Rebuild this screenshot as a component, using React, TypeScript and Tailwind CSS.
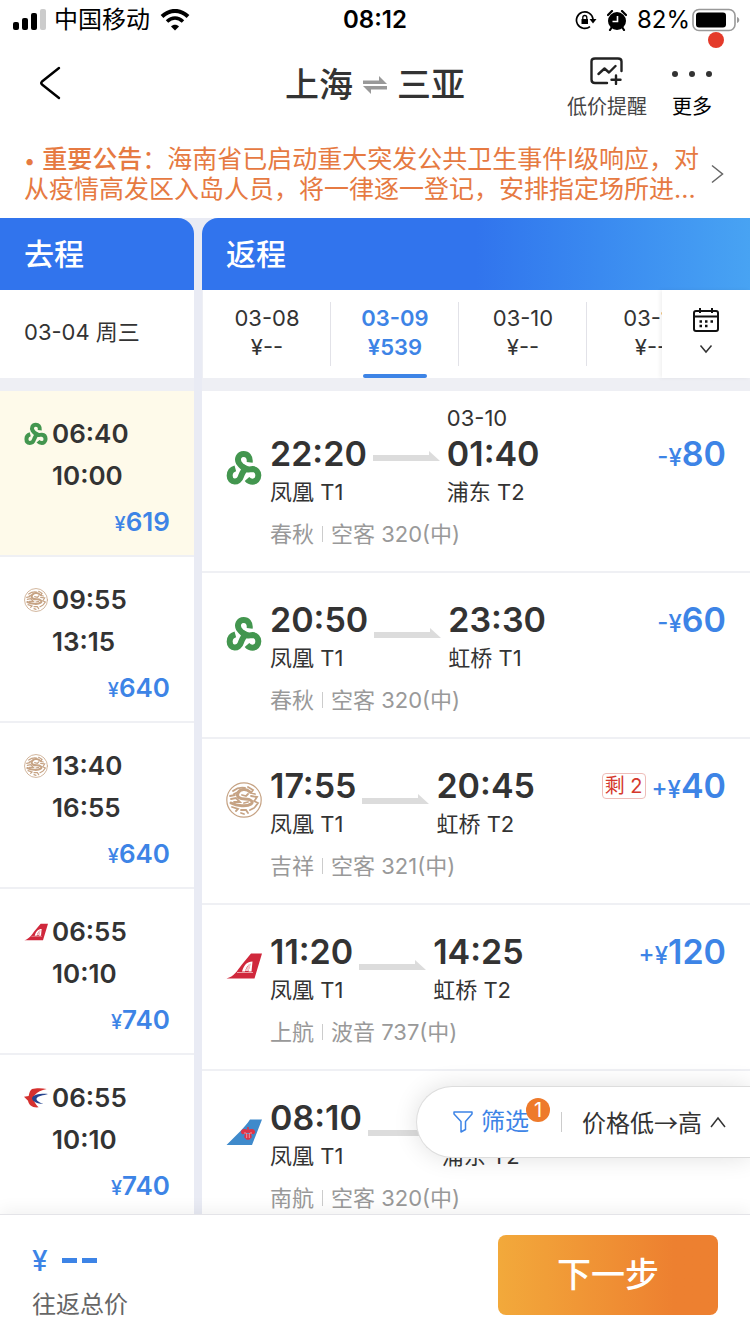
import React, { useState } from 'react';
import { clsx } from 'clsx';

type Airline = 'spring' | 'juneyao' | 'shanghai' | 'eastern' | 'southern';

interface OutboundFlight {
  id: number;
  airline: Airline;
  depart: string;
  arrive: string;
  price: string;
}

interface ReturnFlight {
  id: number;
  airline: Airline;
  depart: string;
  arrive: string;
  nextDay?: string;
  from: string;
  to: string;
  carrier: string;
  aircraft: string;
  sign: string;
  price: string;
  left?: string;
}

const outbound: OutboundFlight[] = [
  { id: 1, airline: 'spring', depart: '06:40', arrive: '10:00', price: '619' },
  { id: 2, airline: 'juneyao', depart: '09:55', arrive: '13:15', price: '640' },
  { id: 3, airline: 'juneyao', depart: '13:40', arrive: '16:55', price: '640' },
  { id: 4, airline: 'shanghai', depart: '06:55', arrive: '10:10', price: '740' },
  { id: 5, airline: 'eastern', depart: '06:55', arrive: '10:10', price: '740' },
];

const returns: ReturnFlight[] = [
  { id: 1, airline: 'spring', depart: '22:20', arrive: '01:40', nextDay: '03-10', from: '凤凰 T1', to: '浦东 T2', carrier: '春秋', aircraft: '空客 320(中)', sign: '-', price: '80' },
  { id: 2, airline: 'spring', depart: '20:50', arrive: '23:30', from: '凤凰 T1', to: '虹桥 T1', carrier: '春秋', aircraft: '空客 320(中)', sign: '-', price: '60' },
  { id: 3, airline: 'juneyao', depart: '17:55', arrive: '20:45', from: '凤凰 T1', to: '虹桥 T2', carrier: '吉祥', aircraft: '空客 321(中)', sign: '+', price: '40', left: '剩 2' },
  { id: 4, airline: 'shanghai', depart: '11:20', arrive: '14:25', from: '凤凰 T1', to: '虹桥 T2', carrier: '上航', aircraft: '波音 737(中)', sign: '+', price: '120' },
  { id: 5, airline: 'southern', depart: '08:10', arrive: '11:05', from: '凤凰 T1', to: '浦东 T2', carrier: '南航', aircraft: '空客 320(中)', sign: '+', price: '120' },
];

const days = [
  { date: '03-08', price: '¥--' },
  { date: '03-09', price: '¥539' },
  { date: '03-10', price: '¥--' },
  { date: '03-11', price: '¥--' },
];

function AirlineLogo({ airline, className }: { airline: Airline; className?: string }) {
  switch (airline) {
    case 'spring':
      return (
        <svg viewBox="-2 -2 108 106" className={className} fill="none" stroke="#43964f" strokeWidth="18">
          <path d="M69 34C71 17 62 9 51 9C36 9 30 24 37 36C42 44 48 48 54 53C62 59 68 54 78 54C88 55 95 62 95 73C95 84 87 92 78 92C71 92 66 90 61 84" />
          <path d="M60 44C54 56 48 62 43 76C37 97 9 97 9 74C9 62 15 55 26 52" />
        </svg>
      );
    case 'juneyao':
      return (
        <svg viewBox="0 0 36 36" className={className} fill="none" stroke="#c6a384" strokeLinecap="round">
          <circle cx="18" cy="18" r="17.2" strokeWidth="1.2" />
          <path d="M24 10C20 6 14 7 12 11C10 15 14 17 19 17C25 17 28 20 25 22C21 25 11 24 5 21" strokeWidth="3" />
          <path d="M7 9C11 6 14 5 19 6M8 12L14 9M22 5L27 8L25 11L29 12M4 14L9 13M5 17L10 16L14 20L8 20M16 13L20 14L22 12M25 14L31 15L29 18M28 19L32 21L29 25M22 20L18 21M6 25L12 27L10 29M15 28L20 28L22 31M24 28L28 26M15 31L18 32" strokeWidth="1.8" />
        </svg>
      );
    case 'shanghai':
      return (
        <svg viewBox="0 0 36 36" className={className}>
          <path d="M25 5.500H36L28.500 30.500H0.500C8 28.500 11 23 15.500 17Z" fill="#d0283c" />
          <path d="M16 23.500C18 17 21 13.500 26.500 13.500L25.500 23.500H22.500L24.500 15.500C21.500 17 20 20 19 23.500Z" fill="#fff" />
          <path d="M19 23L23 16H25L22.500 23Z" fill="#f3c9cd" />
          <path d="M11 24.500H27" stroke="#eba3a8" strokeWidth="1" />
        </svg>
      );
    case 'eastern':
      return (
        <svg viewBox="0 0 36 36" className={className}>
          <path d="M12 4.500C18 3 27 3 34 4.500C26 6 20 9 16 14C13 18 15 26 22 32C12 33 7 28 6 22L0 16L7 15C8 10 9 7 12 4.500Z" fill="#d5312f" />
          <path d="M36 12C25 11 13 13 12 18.500C12 23 20 27 29 27C21 24 18 21.500 19 18.500C21 15 29 14 36 12Z" fill="#27458f" />
        </svg>
      );
    case 'southern':
      return (
        <svg viewBox="0 0 36 36" className={className}>
          <path d="M24 5.500H36L26 31H0.500L14.500 17C18 13 21 10 24 5.500Z" fill="#3f8acb" />
          <path d="M22 13V17M17 20C14.500 18 16 15 20 16L22 18L24 16C28 15 29.500 18 27 20M20 18L19 23L21 25H23L25 23L24 18Z" fill="#df3447" stroke="#df3447" strokeWidth="1.600" />
          <path d="M19 18V20M20.700 19V24M23.300 19V24M25 18V20" stroke="#f3c1c8" strokeWidth="0.700" />
        </svg>
      );
  }
}

function StatusBar() {
  return (
    <div className="grid h-10 grid-cols-3 items-center pr-3 pl-3 text-black">
      <div className="flex items-center">
        <svg viewBox="0 0 34 22" className="mr-2 h-[22px] w-[34px]">
          <rect x="1" y="13" width="6" height="8" rx="2" />
          <rect x="10" y="9" width="6" height="12" rx="2" />
          <rect x="19" y="4" width="6" height="17" rx="2" />
          <rect x="28" y="0" width="6" height="21" rx="2" fill="#ccc" />
        </svg>
        <span className="text-2xl">中国移动</span>
        <svg viewBox="0 0 30 22" className="ml-2.5 h-[22px] w-[30px]" fill="none" stroke="#000">
          <path d="M2 7.500C10 0 20 0 28 7.500" strokeWidth="4" />
          <path d="M7 12.500C12 8 18 8 23 12.500" strokeWidth="3.600" />
          <path d="M11 17.500C13 15 17 15 19 17.500L15 21.500Z" fill="#000" stroke="none" />
        </svg>
      </div>
      <div className="text-center text-2xl font-semibold">08:12</div>
      <div className="flex items-center justify-end">
        <svg viewBox="0 0 22 20" className="mr-2.5 h-5 w-[22px]" fill="none" stroke="#000" strokeWidth="1.700">
          <path d="M15 16.600A8.300 8.300 0 1 1 18 9" />
          <path d="M14.500 9H21.500L18 13.500Z" fill="#000" stroke="none" />
          <rect x="6.500" y="9" width="6.500" height="5" fill="#000" stroke="none" />
          <path d="M7.800 9V7.500A2 2 0 0 1 11.800 7.500V9" strokeWidth="1.300" />
        </svg>
        <svg viewBox="0 0 20 21" className="mr-2.5 h-[21px] w-5">
          <circle cx="10" cy="11" r="9" />
          <path d="M1 5L5 1M15 1L19 5M3 20L5 17M17 20L15 17" stroke="#000" strokeWidth="2.200" strokeLinecap="round" />
          <path d="M10.500 6V11.500H5.500" stroke="#fff" strokeWidth="1.600" fill="none" />
        </svg>
        <span className="mr-0.5 text-2xl">82%</span>
        <svg viewBox="0 0 48 24" className="-mr-0.5 h-6 w-12 shrink-0">
          <rect x="1" y="1.500" width="42" height="21" rx="6" fill="none" stroke="#999" strokeWidth="1.600" />
          <rect x="4" y="4.500" width="30" height="15" rx="3" />
          <path d="M45 9C48 10 48 14 45 15Z" fill="#999" />
        </svg>
      </div>
    </div>
  );
}

function NavBar() {
  return (
    <header className="relative grid h-[90px] grid-cols-[1fr_auto_1fr] items-center">
      <button aria-label="返回" className="ml-9 flex h-10 w-10 items-center pb-1">
        <svg viewBox="0 0 28 36" className="h-9 w-7" fill="none" stroke="#000" strokeWidth="2.400" strokeLinecap="round" strokeLinejoin="round">
          <path d="M23 3L6 16.500Q4.500 18 6 19.500L23 33" />
        </svg>
      </button>
      <h1 className="flex items-center text-[34px] leading-10 font-medium text-[#333]">
        上海
        <svg viewBox="0 0 24 20" className="mx-2.5 h-5 w-6 text-[#999]" fill="currentColor">
          <path d="M0 5.500H16V1L24 9H0Z" />
          <path d="M24 14.500H8V19L0 11H24Z" />
        </svg>
        三亚
      </h1>
      <div className="flex items-start justify-end gap-6 pt-1.5 pr-[37px] text-xl leading-6">
        <button className="flex flex-col items-center gap-2.5 text-[#444]">
          <svg viewBox="0 0 34 28" className="h-7 w-[34px]" fill="none" stroke="#222" strokeWidth="2.400" strokeLinecap="round" strokeLinejoin="round">
            <path d="M17 26H5Q1.500 26 1.500 22.500V4.500Q1.500 1.500 5 1.500H28Q31.500 1.500 31.500 4.500V14" />
            <path d="M8.500 17L14.500 11.500L19 15.500L25.500 9M26 18.500V27M21.500 22.800H30.500" />
          </svg>
          低价提醒
        </button>
        <button className="flex flex-col items-center gap-2.5 text-black">
          <svg viewBox="0 0 42 28" className="h-7 w-[42px]" fill="#333">
            <circle cx="4" cy="17" r="3" />
            <circle cx="21" cy="17" r="3" />
            <circle cx="38" cy="17" r="3" />
          </svg>
          更多
        </button>
      </div>
      <span className="absolute -top-2 right-[26px] size-4 rounded-full bg-[#e43a2a]" />
    </header>
  );
}

function Notice() {
  return (
    <a href="#notice" className="flex h-[88px] items-center pr-6 pl-6 text-[#e67a42]">
      <p className="flex-1 text-[25px] leading-[29px]">
        <span className="text-xl">•</span> <span className="font-medium">重要公告</span>：海南省已启动重大突发公共卫生事件I级响应，对从疫情高发区入岛人员，将一律逐一登记，安排指定场所进...
      </p>
      <svg viewBox="0 0 16 20" className="h-5 w-4 shrink-0" fill="none" stroke="#666" strokeWidth="1.500">
        <path d="M2 1.500L12.500 10L2 18.500" />
      </svg>
    </a>
  );
}

function DayTabs() {
  const [active, setActive] = useState('03-09');

  return (
    <div className="flex h-[88px] shrink-0 bg-white">
      <div className="flex min-w-0 flex-1 overflow-hidden border-l border-[#eeeff4]">
        {days.map((day) => (
          <button
            key={day.date}
            onClick={() => setActive(day.date)}
            className={clsx(
              'relative flex w-32 shrink-0 flex-col items-center pt-3.5 pb-4 text-[22px] leading-[29px]',
              active === day.date ? 'font-semibold text-[#3d84e6]' : 'text-[#333]'
            )}
          >
            <span>{day.date}</span>
            <span>{day.price}</span>
            <span className="absolute top-3 right-0 h-16 w-px bg-[#e2e2e8]" />
            {active === day.date && <span className="absolute bottom-0 h-1 w-16 rounded-sm bg-[#3d84e6]" />}
          </button>
        ))}
      </div>
      <button aria-label="选择日期" className="z-10 flex w-[88px] flex-col items-center bg-white pt-[18px] shadow-[-2px_0_4px_rgba(0,0,0,0.06)]">
        <svg viewBox="0 0 28 24" className="h-6 w-7" fill="none" stroke="#111" strokeWidth="2">
          <rect x="2" y="3" width="24" height="20" rx="2" />
          <path d="M2 8.500H26M8 0V5M20 0V5" />
          <path d="M7.500 13.500H10M13 13.500H15.500M18.500 13.500H21M7.500 18H10M13 18H15.500" strokeWidth="2.400" />
        </svg>
        <svg viewBox="0 0 14 10" className="mt-3 h-2.5 w-3.5" fill="none" stroke="#333" strokeWidth="1.500">
          <path d="M1.500 1.500L7 8L12.500 1.500" />
        </svg>
      </button>
    </div>
  );
}

function OutboundRow({ flight, selected, onSelect }: { flight: OutboundFlight; selected: boolean; onSelect: () => void }) {
  return (
    <button
      onClick={onSelect}
      className={clsx(
        'flex w-full shrink-0 flex-col border-b-2 border-[#eff0f4] pt-[22px] pr-6 pb-2 pl-6 text-left text-[26px] leading-[42px] font-semibold text-[#333]',
        selected ? 'bg-[#fefaea]' : 'bg-white'
      )}
    >
      <span className="flex items-center gap-1">
        <AirlineLogo airline={flight.airline} className="size-6" />
        {flight.depart}
      </span>
      <span className="pl-7">{flight.arrive}</span>
      <span className="self-end leading-[50px] text-[#3d84e6]">
        <span className="text-xl font-medium">¥</span>
        {flight.price}
      </span>
    </button>
  );
}

function ReturnRow({ flight }: { flight: ReturnFlight }) {
  return (
    <button
      className={clsx(
        'flex w-full shrink-0 items-start gap-2 border-b-2 border-[#eff0f4] bg-white pr-6 pb-[13px] pl-6 text-left',
        flight.nextDay ? 'pt-[43px]' : 'pt-[27px]'
      )}
    >
      <AirlineLogo airline={flight.airline} className="mt-4 size-9 shrink-0" />
      <span className="block flex-1 text-[22px] text-[#333]">
        <span className="flex items-start">
          <span className="flex flex-col">
            <span className="text-[34px] leading-10 font-semibold">{flight.depart}</span>
            <span className="leading-9">{flight.from}</span>
          </span>
          <svg viewBox="0 0 68 12" className={clsx('mx-1.5 h-3 w-[68px]', flight.nextDay ? 'mt-[17px]' : 'mt-7')} fill="#dcdcdc">
            <path d="M0 4H56V0L67 10H0Z" />
          </svg>
          <span className={clsx('flex flex-col', flight.nextDay && '-mt-8')}>
            {flight.nextDay && <span className="leading-8">{flight.nextDay}</span>}
            <span className="text-[34px] leading-10 font-semibold">{flight.arrive}</span>
            <span className="leading-9">{flight.to}</span>
          </span>
          <span className="ml-auto flex items-center gap-1.5">
            {flight.left && (
              <span className="rounded border border-[#eebdb9] px-0.5 text-xl leading-6 text-[#d5392c]">{flight.left}</span>
            )}
            <span className="text-[34px] leading-10 font-semibold text-[#3d84e6]">
              <span className="text-2xl font-medium">{flight.sign}¥</span>
              {flight.price}
            </span>
          </span>
        </span>
        <span className="flex items-center leading-[48px] text-[#999]">
          {flight.carrier}
          <span className="mx-2 h-4 w-px bg-[#ccc]" />
          {flight.aircraft}
        </span>
      </span>
    </button>
  );
}

function FilterPill() {
  return (
    <div className="absolute right-0 bottom-14 flex h-18 items-center rounded-l-full border border-r-0 border-[#ddd] bg-white pr-6 pl-9 text-2xl text-[#333] shadow-[0_0_24px_rgba(0,0,0,0.12)]">
      <button className="relative flex items-center gap-2 text-[#3d84e6]">
        <svg viewBox="0 0 20 24" className="h-6 w-5" fill="none" stroke="currentColor" strokeWidth="1.500" strokeLinejoin="round">
          <path d="M1 2H19V4L12.500 11.500V19.500L8 22V11.500L1 4Z" />
        </svg>
        筛选
        <span className="absolute -top-2 left-[73px] flex size-6 items-center justify-center rounded-full bg-[#ee7a2b] text-xl text-white">1</span>
      </button>
      <span className="mr-5 ml-8 h-5 w-px bg-[#ccc]" />
      <button className="flex items-center gap-2">
        <span className="font-['Noto_Sans_CJK_SC',sans-serif]">价格低→高</span>
        <svg viewBox="0 0 16 12" className="h-3 w-4" fill="none" stroke="#333" strokeWidth="1.500">
          <path d="M1 11L8 2L15 11" />
        </svg>
      </button>
    </div>
  );
}

export default function App() {
  const [selected, setSelected] = useState(1);

  return (
    <div className="flex h-screen flex-col overflow-hidden bg-white font-['Inter','Noto_Sans_CJK_SC',sans-serif]">
      <StatusBar />
      <NavBar />
      <Notice />

      <main className="relative flex min-h-0 flex-1 gap-2 bg-[#e9ebf4]">
        <section className="flex w-[194px] shrink-0 flex-col overflow-hidden">
          <h2 className="flex h-18 shrink-0 items-center rounded-tr-2xl bg-[#3174ed] pl-6 text-[30px] font-medium text-white">去程</h2>
          <div className="flex h-[88px] shrink-0 items-center bg-white pb-1 pl-6 text-[22px] text-[#333]">03-04 周三</div>
          <div className="h-[13px] shrink-0 bg-[#eeeff4]" />
          {outbound.map((flight) => (
            <OutboundRow
              key={flight.id}
              flight={flight}
              selected={flight.id === selected}
              onSelect={() => setSelected(flight.id)}
            />
          ))}
        </section>

        <section className="flex min-w-0 flex-1 flex-col overflow-hidden">
          <h2 className="flex h-18 shrink-0 items-center rounded-tl-2xl bg-linear-to-r from-[#3174ed] from-50% to-[#48a3f3] pl-6 text-[30px] font-medium text-white">返程</h2>
          <DayTabs />
          <div className="h-[13px] shrink-0 bg-[#eeeff4]" />
          {returns.map((flight) => (
            <ReturnRow key={flight.id} flight={flight} />
          ))}
        </section>

        <FilterPill />
      </main>

      <footer className="z-10 flex h-[120px] shrink-0 items-center justify-between border-t border-[#e4e4e8] bg-white pr-8 pl-8 shadow-[0_-4px_16px_rgba(0,0,0,0.06)]">
        <div className="pt-3">
          <div className="flex items-center gap-3.5 text-[28px] leading-10 font-medium text-[#3d84e6]">
            ¥
            <svg viewBox="0 0 36 6" className="h-1.5 w-9" fill="currentColor">
              <path d="M0 0H15V5H0ZM20 0H35V5H20Z" />
            </svg>
          </div>
          <div className="mt-2 text-2xl text-[#666]">往返总价</div>
        </div>
        <button className="h-20 w-[220px] rounded-lg bg-linear-to-r from-[#f2a93b] to-[#ed8030] to-80% text-[34px] font-medium text-white">下一步</button>
      </footer>
    </div>
  );
}
